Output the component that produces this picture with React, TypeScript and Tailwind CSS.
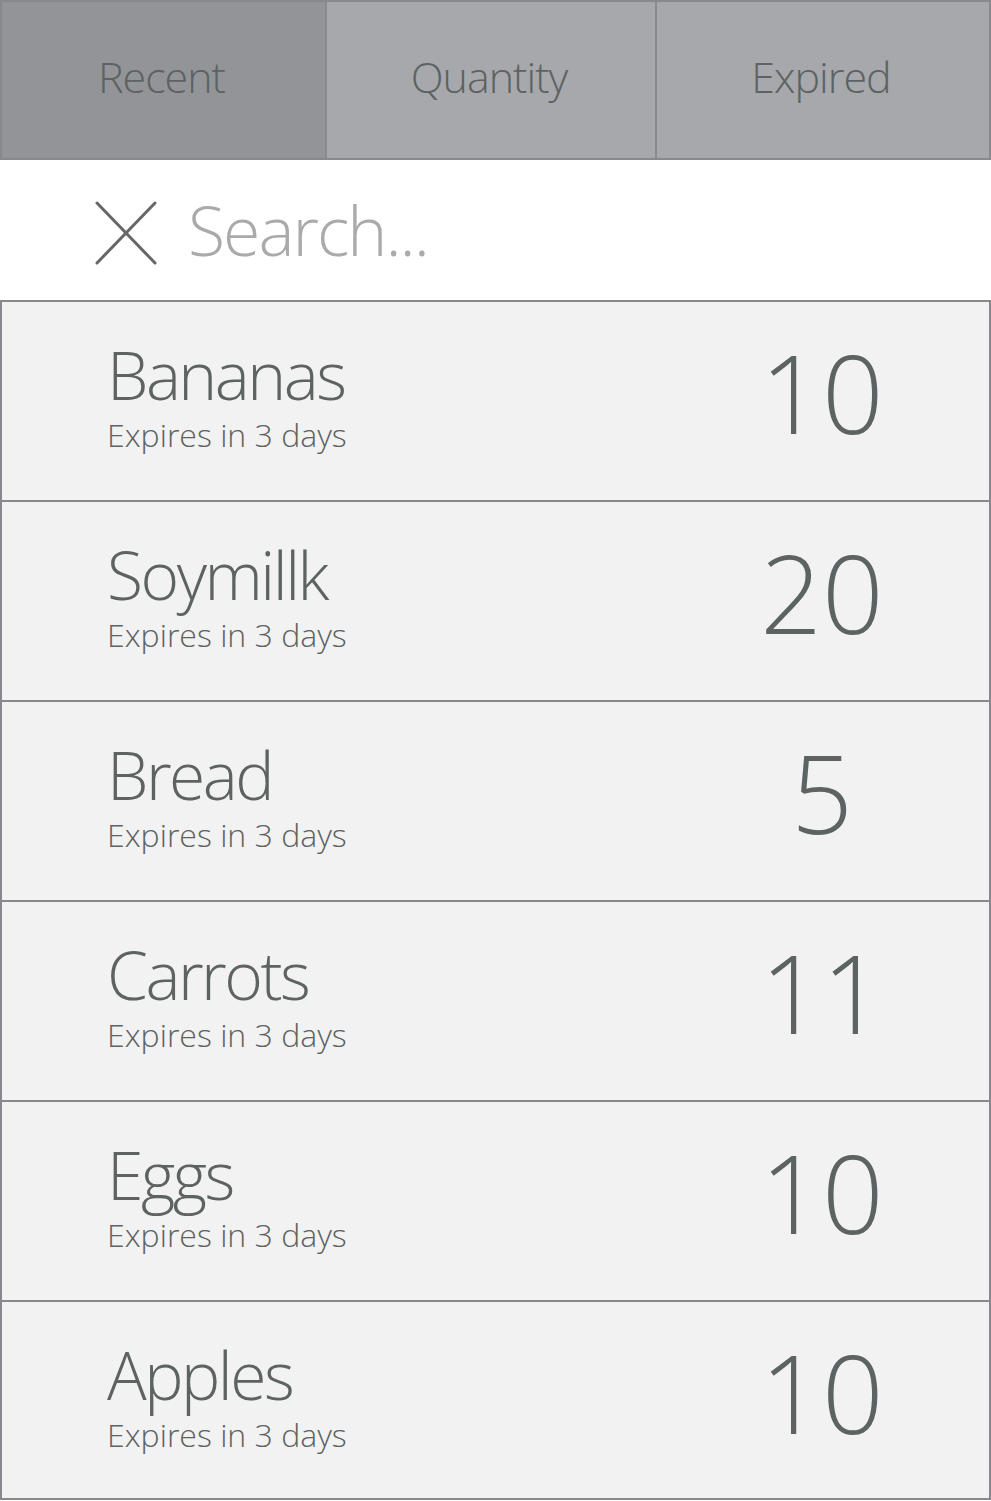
const tabs = ["Recent", "Quantity", "Expired"];

const items = [
  { name: "Bananas", qty: 10 },
  { name: "Soymillk", qty: 20 },
  { name: "Bread", qty: 5 },
  { name: "Carrots", qty: 11 },
  { name: "Eggs", qty: 10 },
  { name: "Apples", qty: 10 },
];

export default function App() {
  return (
    <div className="w-[991px] min-h-[1501px] bg-white font-['Open_Sans',sans-serif] font-light text-[#5d6262]">
      <div className="flex h-[160px] border-2 border-[#88898c]">
        {tabs.map((tab, i) => (
          <div
            key={tab}
            className={
              i === 0
                ? "w-[323px] flex items-center justify-center pb-2 pr-1 bg-[#939497] text-[43px] leading-none tracking-[-1px]"
                : i === 1
                ? "w-[330px] flex items-center justify-center pb-2 pr-1 bg-[#a7a8ab] border-l-2 border-[#88898c] text-[43px] leading-none tracking-[-1px]"
                : "flex-1 flex items-center justify-center pb-2 pr-1 bg-[#a7a8ab] border-l-2 border-[#88898c] text-[43px] leading-none tracking-[-1px]"
            }
          >
            {tab}
          </div>
        ))}
      </div>

      <div className="h-[140px] flex items-center pl-[95px]">
        <svg width="62" height="64" viewBox="0 0 62 64" className="mt-[6px]">
          <path d="M2 2 L60 62 M60 2 L2 62" stroke="#666768" strokeWidth="3" strokeLinecap="round" />
        </svg>
        <span className="ml-[31px] text-[68px] leading-none tracking-[-2px] text-[#a9aaac]">Search...</span>
      </div>

      <div>
        {items.map((item, i) => (
          <div
            key={item.name + i}
            className={
              i === items.length - 1
                ? "h-[200px] flex bg-[#f2f2f2] border-2 border-[#88898c]"
                : "h-[200px] flex bg-[#f2f2f2] border-2 border-b-0 border-[#88898c]"
            }
          >
            <div className="flex-1 pl-[105px] pt-[39px]">
              <div className="text-[66px] leading-[66px] tracking-[-2.5px]">{item.name}</div>
              <div className="mt-[10px] text-[32px] leading-[36px]">Expires in 3 days</div>
            </div>
            <div className="w-[334px] pt-[37px] text-center text-[108px] leading-none">{item.qty}</div>
          </div>
        ))}
      </div>
    </div>
  );
}
